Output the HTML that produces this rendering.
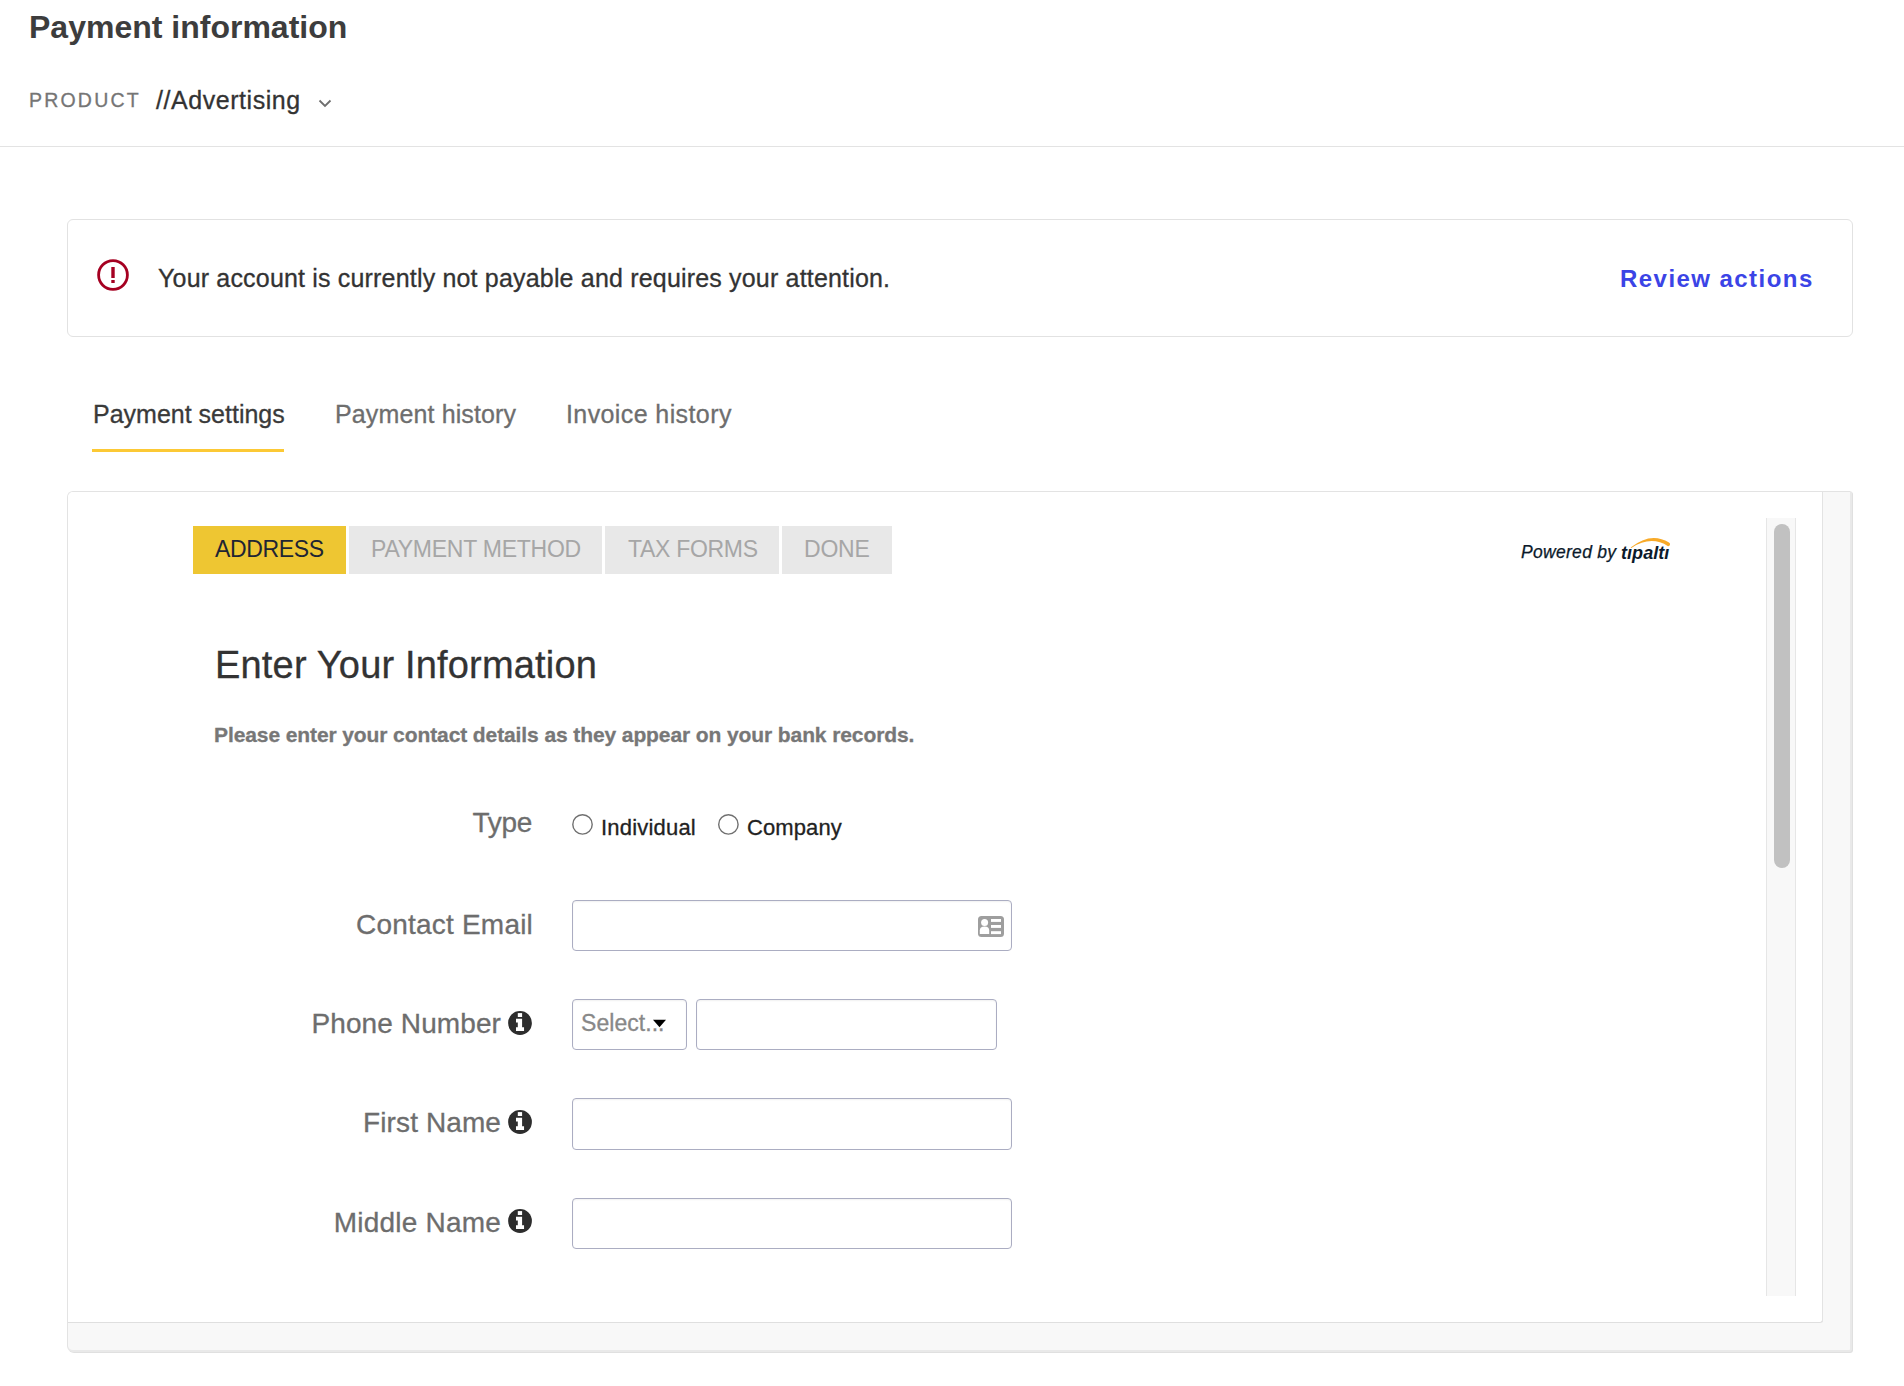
<!DOCTYPE html>
<html>
<head>
<meta charset="utf-8">
<style>
html,body{margin:0;padding:0;background:#fff;width:1904px;height:1386px;overflow:hidden;}
body{position:relative;font-family:"Liberation Sans",sans-serif;}
.a{position:absolute;white-space:nowrap;line-height:1;}
.t{-webkit-text-stroke:0.3px currentColor;}
.lab{font-size:28px;color:#6d6d6d;text-align:right;}
.rl{font-size:22px;color:#222;}
.inp{border:1px solid #abadc2;border-radius:4px;background:#fff;box-shadow:inset 0 1px 2px rgba(0,0,0,0.06);}
</style>
</head>
<body>
<!-- Header -->
<div class="a" id="title" style="left:29px;top:11px;font-size:32px;font-weight:bold;color:#3d3d3d;">Payment information</div>
<div class="a t" id="product" style="left:29px;top:91px;font-size:19.5px;letter-spacing:2.2px;color:#757575;">PRODUCT</div>
<div class="a t" id="adv" style="left:156px;top:88px;font-size:25px;letter-spacing:0.55px;color:#333;">//Advertising</div>
<svg class="a" style="left:317px;top:97px" width="16" height="12" viewBox="0 0 16 12"><polyline points="2.5,3.5 8,9 13.5,3.5" fill="none" stroke="#6e6e6e" stroke-width="1.8"/></svg>
<div class="a" style="left:0;top:146px;width:1904px;height:1px;background:#e3e3e3;"></div>

<!-- Alert -->
<div class="a" style="left:67px;top:219px;width:1784px;height:116px;border:1px solid #e2e2e2;border-radius:6px;"></div>
<svg class="a" style="left:96px;top:258px" width="34" height="34" viewBox="0 0 34 34"><circle cx="17" cy="17" r="14.4" fill="none" stroke="#a50021" stroke-width="2.8"/><rect x="15.3" y="9" width="3.4" height="11" fill="#a50021"/><rect x="15.3" y="22" width="3.4" height="3" fill="#a50021"/></svg>
<div class="a t" id="alerttext" style="left:158px;top:266px;font-size:25px;letter-spacing:0.18px;color:#333;">Your account is currently not payable and requires your attention.</div>
<div class="a" id="review" style="left:1620px;top:267px;font-size:24px;font-weight:bold;letter-spacing:1.45px;color:#3b44e6;">Review actions</div>

<!-- Tabs -->
<div class="a t" id="tab1" style="left:93px;top:402px;font-size:25px;color:#3a3a3a;">Payment settings</div>
<div class="a t" id="tab2" style="left:335px;top:402px;font-size:25px;letter-spacing:0.13px;color:#6e6e6e;">Payment history</div>
<div class="a t" id="tab3" style="left:566px;top:402px;font-size:25px;letter-spacing:0.4px;color:#6e6e6e;">Invoice history</div>
<div class="a" style="left:92px;top:449px;width:192px;height:3px;background:#fcc935;"></div>

<!-- Outer frame -->
<div class="a" style="left:67px;top:491px;width:1782px;height:858px;border:1px solid #e3e3e3;border-right:2px solid #e9e9e9;border-bottom:2px solid #e9e9e9;border-radius:6px 2px 3px 6px;background:#f8f8f8;box-shadow:1px 1px 0 #e0e0e0;"></div>
<div class="a" style="left:68px;top:492px;width:1754px;height:830px;background:#fff;border-right:1px solid #dfdfdf;border-bottom:1px solid #dfdfdf;border-radius:5px 0 3px 0;"></div>
<div class="a" style="left:1822px;top:492px;width:1px;height:830px;background:#e3e3e3;"></div>

<!-- inner scrollbar -->
<div class="a" style="left:1766px;top:518px;width:28px;height:778px;background:#f8f8f8;border-left:1px solid #e6e6e6;border-right:1px solid #e6e6e6;"></div>
<div class="a" style="left:1774px;top:524px;width:16px;height:344px;background:#c1c1c1;border-radius:8px;"></div>

<!-- Steps -->
<div class="a" style="left:193px;top:526px;width:153px;height:48px;background:#eec632;"></div>
<div class="a" style="left:349px;top:526px;width:253px;height:48px;background:#e8e8e8;"></div>
<div class="a" style="left:605px;top:526px;width:174px;height:48px;background:#e8e8e8;"></div>
<div class="a" style="left:782px;top:526px;width:110px;height:48px;background:#e8e8e8;"></div>
<div class="a" id="st1" style="left:215px;top:538px;font-size:23px;letter-spacing:-0.35px;color:#1f2533;">ADDRESS</div>
<div class="a" id="st2" style="left:371px;top:538px;font-size:23px;letter-spacing:-0.25px;color:#a6a6a6;">PAYMENT METHOD</div>
<div class="a" id="st3" style="left:628px;top:538px;font-size:23px;letter-spacing:-0.3px;color:#a6a6a6;">TAX FORMS</div>
<div class="a" id="st4" style="left:804px;top:538px;font-size:23px;letter-spacing:-0.2px;color:#a6a6a6;">DONE</div>

<!-- Powered by -->
<div class="a" id="pow" style="left:1521px;top:544px;font-size:17.5px;letter-spacing:0.3px;-webkit-text-stroke:0.25px #0b1a2b;font-style:italic;color:#0b1a2b;">Powered by</div>
<div class="a" id="tip" style="left:1621px;top:544px;font-size:18px;letter-spacing:0.05px;font-style:italic;font-weight:bold;color:#0b1a2b;">t&#305;palt&#305;</div>
<svg class="a" style="left:1625px;top:530px" width="50" height="22" viewBox="0 0 50 22"><path d="M5.6,17.6 Q26,1.3 44,12.6 A1.9,1.9 0 0 1 43,16.2 Q26,5.2 6.4,17.9 Z" fill="#f8aa28"/></svg>

<!-- Content -->
<div class="a t" id="h1" style="left:215px;top:646px;font-size:38px;letter-spacing:0.18px;color:#333;">Enter Your Information</div>
<div class="a t" id="sub" style="left:214px;top:724px;font-size:21px;letter-spacing:-0.1px;font-weight:bold;color:#777;">Please enter your contact details as they appear on your bank records.</div>

<!-- Form -->
<div class="a lab t" id="lt" style="right:1372px;top:809px;letter-spacing:-0.3px;">Type</div>
<svg class="a" style="left:571px;top:813px" width="23" height="23" viewBox="0 0 23 23"><circle cx="11.5" cy="11.4" r="9.7" fill="#fff" stroke="#707070" stroke-width="1.4"/></svg>
<div class="a rl t" id="ind" style="left:601px;top:817px;letter-spacing:0.2px;">Individual</div>
<svg class="a" style="left:717px;top:813px" width="23" height="23" viewBox="0 0 23 23"><circle cx="11.4" cy="11.4" r="9.7" fill="#fff" stroke="#707070" stroke-width="1.4"/></svg>
<div class="a rl t" id="com" style="left:747px;top:817px;letter-spacing:0.1px;">Company</div>

<div class="a lab t" id="le" style="right:1371px;top:911px;letter-spacing:0.2px;">Contact Email</div>
<div class="a inp" style="left:572px;top:900px;width:438px;height:49px;"></div>
<svg class="a" style="left:978px;top:916px" width="26" height="21" viewBox="0 0 26 21"><rect x="0" y="0" width="26" height="21" rx="3.5" fill="#9e9e9e"/><circle cx="6.6" cy="6.4" r="3.5" fill="#fff"/><path d="M1.8,18 V14.5 Q1.8,10.5 6.6,10.5 Q11.2,10.5 11.2,14.5 V18 Z" fill="#fff"/><rect x="13" y="3" width="10" height="2.9" fill="#fff"/><rect x="13" y="9" width="10" height="2.9" fill="#fff"/><rect x="13" y="15.2" width="10" height="2.9" fill="#fff"/></svg>

<div class="a lab t" id="lp" style="right:1403px;top:1010px;letter-spacing:0.1px;">Phone Number</div>
<svg class="a info" style="left:508px;top:1011px" width="24" height="24" viewBox="-12 -12 24 24"><circle r="11.9" fill="#2d2d2d"/><rect x="-2.2" y="-9.9" width="4.3" height="3.9" fill="#fff"/><path d="M-4,-4.15 H2.1 V4.2 H4.05 V8.1 H-4 V4.2 H-2.2 V-0.6 H-4 Z" fill="#fff"/></svg>
<div class="a inp" style="left:572px;top:999px;width:113px;height:49px;"></div>
<div class="a t" id="sel" style="left:581px;top:1012px;font-size:23px;letter-spacing:0.05px;color:#888;">Select...</div>
<svg class="a" style="left:652px;top:1019px" width="15" height="9" viewBox="0 0 15 9"><path d="M1,0.8 H14 L7.5,8.2 Z" fill="#000"/></svg>
<div class="a inp" style="left:696px;top:999px;width:299px;height:49px;"></div>

<div class="a lab t" id="lf" style="right:1403px;top:1109px;letter-spacing:0.1px;">First Name</div>
<svg class="a info" style="left:508px;top:1110px" width="24" height="24" viewBox="-12 -12 24 24"><circle r="11.9" fill="#2d2d2d"/><rect x="-2.2" y="-9.9" width="4.3" height="3.9" fill="#fff"/><path d="M-4,-4.15 H2.1 V4.2 H4.05 V8.1 H-4 V4.2 H-2.2 V-0.6 H-4 Z" fill="#fff"/></svg>
<div class="a inp" style="left:572px;top:1098px;width:438px;height:50px;"></div>

<div class="a lab t" id="lm" style="right:1403px;top:1209px;letter-spacing:0.2px;">Middle Name</div>
<svg class="a info" style="left:508px;top:1209px" width="24" height="24" viewBox="-12 -12 24 24"><circle r="11.9" fill="#2d2d2d"/><rect x="-2.2" y="-9.9" width="4.3" height="3.9" fill="#fff"/><path d="M-4,-4.15 H2.1 V4.2 H4.05 V8.1 H-4 V4.2 H-2.2 V-0.6 H-4 Z" fill="#fff"/></svg>
<div class="a inp" style="left:572px;top:1198px;width:438px;height:49px;"></div>

</body>
</html>
